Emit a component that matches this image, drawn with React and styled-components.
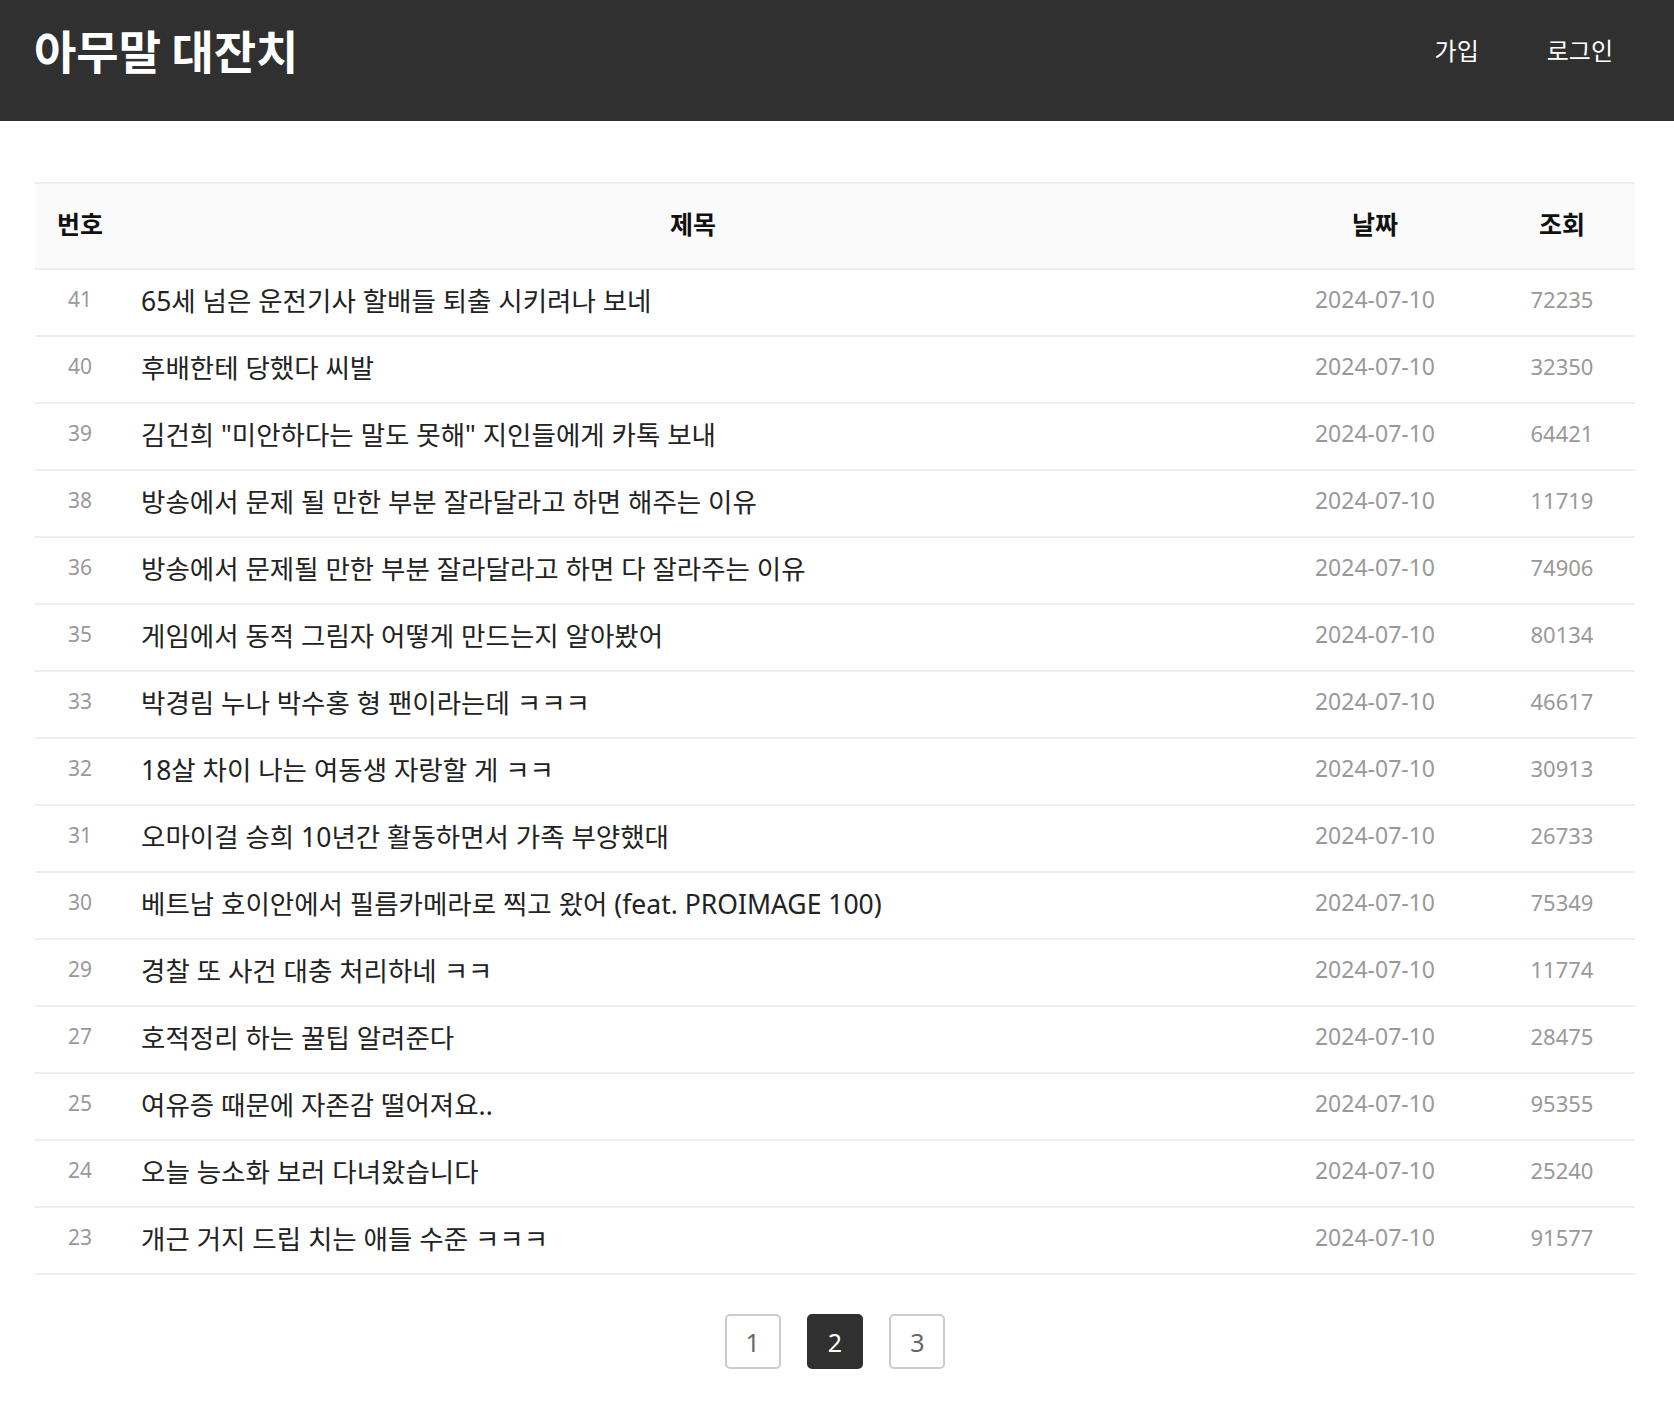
import React from 'react';
import styled, { createGlobalStyle } from 'styled-components';

const posts = [
  { id: 41, title: '65세 넘은 운전기사 할배들 퇴출 시키려나 보네', date: '2024-07-10', views: 72235 },
  { id: 40, title: '후배한테 당했다 씨발', date: '2024-07-10', views: 32350 },
  { id: 39, title: '김건희 "미안하다는 말도 못해" 지인들에게 카톡 보내', date: '2024-07-10', views: 64421 },
  { id: 38, title: '방송에서 문제 될 만한 부분 잘라달라고 하면 해주는 이유', date: '2024-07-10', views: 11719 },
  { id: 36, title: '방송에서 문제될 만한 부분 잘라달라고 하면 다 잘라주는 이유', date: '2024-07-10', views: 74906 },
  { id: 35, title: '게임에서 동적 그림자 어떻게 만드는지 알아봤어', date: '2024-07-10', views: 80134 },
  { id: 33, title: '박경림 누나 박수홍 형 팬이라는데 ㅋㅋㅋ', date: '2024-07-10', views: 46617 },
  { id: 32, title: '18살 차이 나는 여동생 자랑할 게 ㅋㅋ', date: '2024-07-10', views: 30913 },
  { id: 31, title: '오마이걸 승희 10년간 활동하면서 가족 부양했대', date: '2024-07-10', views: 26733 },
  { id: 30, title: '베트남 호이안에서 필름카메라로 찍고 왔어 (feat. PROIMAGE 100)', date: '2024-07-10', views: 75349 },
  { id: 29, title: '경찰 또 사건 대충 처리하네 ㅋㅋ', date: '2024-07-10', views: 11774 },
  { id: 27, title: '호적정리 하는 꿀팁 알려준다', date: '2024-07-10', views: 28475 },
  { id: 25, title: '여유증 때문에 자존감 떨어져요..', date: '2024-07-10', views: 95355 },
  { id: 24, title: '오늘 능소화 보러 다녀왔습니다', date: '2024-07-10', views: 25240 },
  { id: 23, title: '개근 거지 드립 치는 애들 수준 ㅋㅋㅋ', date: '2024-07-10', views: 91577 },
];

const GlobalStyle = createGlobalStyle`
  body {
    margin: 0;
    background: #fff;
    font-family: "Noto Sans", "Noto Sans CJK KR", sans-serif;
    color: #222;
  }
`;

const Header = styled.header`
  height: 121px;
  background: #303030;
  display: flex;
  align-items: center;
  justify-content: space-between;
  padding: 0 61px 23px 34px;
  box-sizing: border-box;
`;

const Logo = styled.h1`
  margin: 0;
  font-family: "Noto Sans CJK KR", sans-serif;
  font-size: 46px;
  font-weight: 700;
  color: #fff;
`;

const Nav = styled.nav`
  display: flex;
  gap: 68px;
`;

const NavLink = styled.a`
  color: #fff;
  font-size: 24px;
  text-decoration: none;
  cursor: pointer;
`;

const Main = styled.main`
  padding: 61px 39px 40px 35px;
`;

const Table = styled.div`
  width: 100%;
  border-top: 2px solid #eee;
`;

const Row = styled.div`
  display: grid;
  grid-template-columns: 90px 1fr 228px 146px;
  align-items: center;
  box-sizing: border-box;
  height: ${(p) => (p.$head ? '86px' : '67px')};
  padding-bottom: 7px;
  background: ${(p) => (p.$head ? '#fafafa' : '#fff')};
  border-bottom: 2px solid #eee;
`;

const HeadCell = styled.div`
  text-align: center;
  font-family: "Noto Sans CJK KR", sans-serif;
  font-size: 25px;
  font-weight: 700;
  color: #111;
`;

const NumCell = styled.div`
  text-align: center;
  font-size: 21px;
  color: #999;
`;

const TitleCell = styled.div`
  padding-left: 16px;
  font-size: 26.5px;
  color: #222;
  white-space: nowrap;
  overflow: hidden;
`;

const MetaCell = styled.div`
  text-align: center;
  font-size: ${(p) => p.$size || 22}px;
  color: #999;
`;

const Pager = styled.div`
  display: flex;
  justify-content: center;
  gap: 26px;
  margin-top: 39px;
`;

const PageButton = styled.button`
  height: 55px;
  padding: 0 19px;
  border-radius: 5px;
  border: 2px solid ${(p) => (p.$active ? '#303030' : '#ccc')};
  background: ${(p) => (p.$active ? '#303030' : '#fff')};
  color: ${(p) => (p.$active ? '#fff' : '#666')};
  font-family: inherit;
  font-size: 25px;
  cursor: pointer;
`;

export default function App() {
  return (
    <>
      <GlobalStyle />
      <Header>
        <Logo>아무말 대잔치</Logo>
        <Nav>
          <NavLink>가입</NavLink>
          <NavLink>로그인</NavLink>
        </Nav>
      </Header>
      <Main>
        <Table>
          <Row $head>
            <HeadCell>번호</HeadCell>
            <HeadCell>제목</HeadCell>
            <HeadCell>날짜</HeadCell>
            <HeadCell>조회</HeadCell>
          </Row>
          {posts.map((post) => (
            <Row key={post.id}>
              <NumCell>{post.id}</NumCell>
              <TitleCell>{post.title}</TitleCell>
              <MetaCell $size={23}>{post.date}</MetaCell>
              <MetaCell>{post.views}</MetaCell>
            </Row>
          ))}
        </Table>
        <Pager>
          {[1, 2, 3].map((n) => (
            <PageButton key={n} $active={n === 2}>
              {n}
            </PageButton>
          ))}
        </Pager>
      </Main>
    </>
  );
}
